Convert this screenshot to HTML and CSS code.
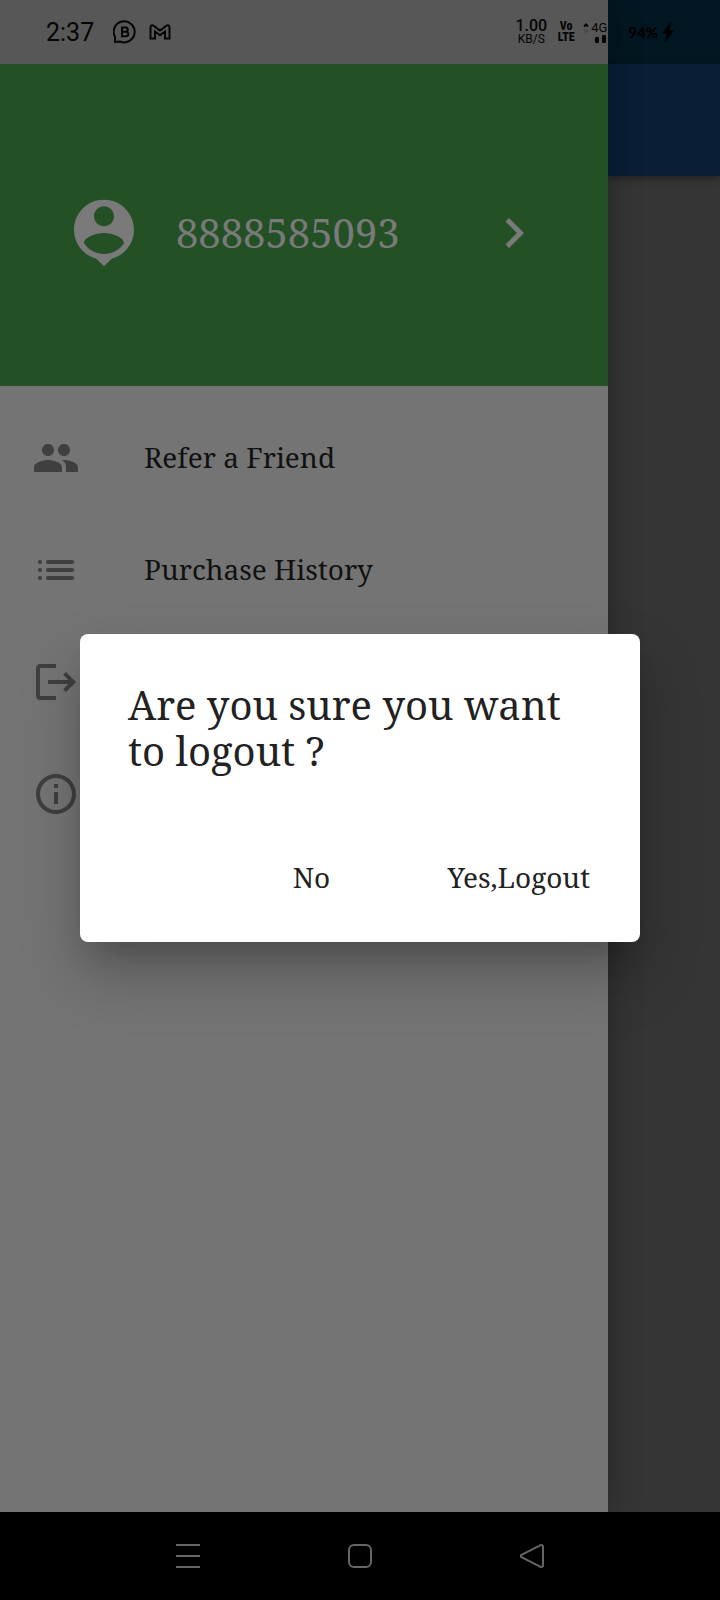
FILE: index.html
```html
<!DOCTYPE html>
<html lang="en">
<head>
<meta charset="utf-8">
<meta name="viewport" content="width=device-width, initial-scale=1">
<title>Logout</title>
<link rel="stylesheet" href="styles.css">
</head>
<body>
<div class="screen">
  <div class="app">
    <nav class="drawer">
      <div class="status-space"></div>
      <button class="account">
        <svg class="account-icon" viewBox="0 0 24 24" aria-hidden="true"><path d="M12 2c-4.97 0-9 4.03-9 9 0 4.17 2.84 7.67 6.69 8.69L12 22l2.31-2.31C18.16 18.67 21 15.17 21 11c0-4.97-4.03-9-9-9zm0 2c1.66 0 3 1.34 3 3s-1.34 3-3 3-3-1.34-3-3 1.34-3 3-3zm0 14.3c-2.5 0-4.71-1.28-6-3.22.03-1.99 4-3.08 6-3.08 1.99 0 5.97 1.09 6 3.08-1.29 1.94-3.5 3.22-6 3.22z"/></svg>
        <span class="phone">8888585093</span>
        <svg class="chevron" viewBox="0 0 24 24" aria-hidden="true"><path d="M10 6L8.59 7.41 13.17 12l-4.58 4.59L10 18l6-6z"/></svg>
      </button>
      <div class="menu">
        <button class="item">
          <svg class="icon" viewBox="0 0 24 24" aria-hidden="true"><path d="M16 11c1.66 0 2.99-1.34 2.99-3S17.66 5 16 5c-1.66 0-3 1.34-3 3s1.34 3 3 3zm-8 0c1.66 0 2.99-1.34 2.99-3S9.66 5 8 5C6.34 5 5 6.34 5 8s1.34 3 3 3zm0 2c-2.33 0-7 1.17-7 3.500V19h14v-2.500c0-2.330-4.670-3.500-7-3.500zm8 0c-.29 0-.62.02-.97.05 1.160.84 1.970 1.970 1.970 3.450V19h6v-2.500c0-2.330-4.670-3.500-7-3.500z"/></svg>
          <span class="label">Refer a Friend</span>
        </button>
        <button class="item">
          <svg class="icon" viewBox="0 0 24 24" aria-hidden="true"><rect x="3" y="7" width="2" height="2" rx=".8"/><rect x="3" y="11" width="2" height="2" rx=".8"/><rect x="3" y="15" width="2" height="2" rx=".8"/><rect x="7" y="7" width="14" height="2" rx=".9"/><rect x="7" y="11" width="14" height="2" rx=".9"/><rect x="7" y="15" width="14" height="2" rx=".9"/></svg>
          <span class="label">Purchase History</span>
        </button>
        <button class="item" aria-label="Logout">
          <svg class="icon" viewBox="0 0 24 24" aria-hidden="true"><path d="M17 7l-1.410 1.410L18.170 11H8v2h10.170l-2.580 2.580L17 17l5-5zM4 5h8V3H4c-1.100 0-2 .9-2 2v14c0 1.100.9 2 2 2h8v-2H4z"/></svg>
        </button>
        <button class="item" aria-label="About">
          <svg class="icon" viewBox="0 0 24 24" aria-hidden="true"><path d="M11 7h2v2h-2zm0 4h2v6h-2zm1-9C6.480 2 2 6.480 2 12s4.480 10 10 10 10-4.480 10-10S17.520 2 12 2zm0 18c-4.410 0-8-3.590-8-8s3.590-8 8-8 8 3.590 8 8-3.590 8-8 8z"/></svg>
        </button>
      </div>
    </nav>
    <main class="page">
      <div class="page-status"></div>
      <div class="page-bar"></div>
    </main>
    <header class="status">
      <span class="clock">2:37</span>
      <svg class="chat" viewBox="0 0 24 24" aria-hidden="true"><path d="M2 22V17A10.500 10.500 0 1 1 7 21.500Q5 21.500 2 22Z"/><path d="M9 7.500h3.600a2.100 2.100 0 0 1 0 4.300H9zM9 11.800h4a2.200 2.200 0 0 1 0 4.500H9z"/></svg>
      <svg class="mail" viewBox="0 0 22 16" aria-hidden="true"><path d="M1.500 14.500V3Q2 .5 4.500 1.600L11 6.500 17.500 1.600Q20 .5 20.500 3V14.500H16V7.500L11 11.200 6 7.500V14.500Z"/></svg>
      <span class="spacer"></span>
      <span class="speed"><span class="rate">1.00</span><span class="unit">KB/S</span></span>
      <span class="volte"><span>Vo</span><span>LTE</span></span>
      <span class="network">
        <span class="net-row"><svg class="arrows" viewBox="0 0 6 10" aria-hidden="true"><path d="M1 3.500L3 1.500 5 3.500"/><path class="dim" d="M1 7L3 9 5 7"/></svg><span class="gen">4G</span></span>
        <svg class="bars" viewBox="0 0 26 20" aria-hidden="true"><rect x="0" y="14" width="4" height="6" rx="1"/><rect x="7" y="12" width="4" height="8" rx="1"/><rect class="faint" x="15" y="7" width="3" height="13" rx="1"/><rect class="faint" x="22" y="0" width="3" height="20" rx="1"/></svg>
      </span>
      <span class="battery">94%</span>
      <svg class="bolt" viewBox="0 0 12 22" aria-hidden="true"><path d="M9 0L0 12.500H4.500L3 22 12 9H7.500Z"/></svg>
    </header>
    <div class="overlay">
      <div class="dialog" role="alertdialog" aria-modal="true" aria-labelledby="dialog-title">
        <h1 class="title" id="dialog-title">Are you sure you want to logout ?</h1>
        <div class="actions">
          <button class="action">No</button>
          <button class="action">Yes,Logout</button>
        </div>
      </div>
    </div>
  </div>
  <footer class="system">
    <button class="key" aria-label="Recent apps"><svg viewBox="0 0 24 24"><path d="M0 1H24M0 12H24M0 23H24"/></svg></button>
    <button class="key" aria-label="Home"><svg viewBox="0 0 24 24"><rect x="1" y="1" width="22" height="22" rx="5"/></svg></button>
    <button class="key" aria-label="Back"><svg viewBox="0 0 24 24"><path d="M1.500 10.800L20.500 1.200Q23 .5 23 3V21Q23 23.500 20.500 22.800L1.500 13.200Q0 12 1.500 10.800Z"/></svg></button>
  </footer>
</div>
</body>
</html>
```

FILE: styles.css
```css
* { box-sizing: border-box; }

body {
  margin: 0;
  background: #000;
  font-family: "Noto Serif", "Droid Serif", "Liberation Serif", serif;
}

button {
  border: 0;
  padding: 0;
  background: none;
  color: inherit;
  font: inherit;
  text-align: left;
}

svg { display: block; flex: none; }

.screen {
  display: flex;
  flex-direction: column;
  min-height: 100vh;
}

.app {
  position: relative;
  flex: 1;
  display: flex;
}

.drawer {
  position: relative;
  flex: 0 0 auto;
  width: calc(100% - 112px);
  background: #747474;
  box-shadow: 0 0 32px rgba(0, 0, 0, .3);
}

.status-space { height: 64px; background: #575757; }

.account {
  display: flex;
  align-items: center;
  width: 100%;
  height: 322px;
  padding: 16px 64px 0;
  background: #245026;
  color: #7a7a7a;
  fill: currentColor;
}

.account-icon { width: 80px; height: 80px; }
.phone { flex: 1; padding: 0 0 2px 32px; font-size: 40px; }
.chevron { width: 60px; height: 60px; }

.menu { padding-top: 16px; }

.item {
  display: flex;
  align-items: center;
  gap: 64px;
  width: 100%;
  height: 112px;
  padding: 0 32px;
  color: #111;
  font-size: 28px;
}

.label { padding-bottom: 2px; }

.icon { width: 48px; height: 48px; fill: #3f3f3f; }

.page { flex: 1; background: #353535; }
.page-status { height: 64px; background: #031722; }
.page-bar {
  height: 112px;
  background: #081f35;
  box-shadow: 0 2px 8px rgba(0, 0, 0, .4);
}

.status {
  position: absolute;
  inset: 0 0 auto;
  display: flex;
  align-items: center;
  height: 64px;
  padding: 0 46px;
  color: #050505;
  font-family: Roboto, sans-serif;
}

.clock { width: 67px; font-size: 25px; }
.chat { width: 24px; height: 24px; fill: none; stroke: #050505; stroke-width: 2; }
.mail { width: 22px; height: 16px; margin-left: 12px; fill: none; stroke: #050505; stroke-width: 2; }
.spacer { flex: 1; }

.speed { display: flex; flex-direction: column; align-items: center; margin-right: 10px; }
.rate { font-size: 16px; font-weight: 500; line-height: 14px; }
.unit { font-size: 12px; line-height: 12px; }

.volte {
  display: flex;
  flex-direction: column;
  align-items: center;
  width: 18px;
  margin-right: 8px;
  font-family: "Roboto Condensed", "Open Sans Condensed", Roboto, sans-serif;
  font-size: 12px;
  font-weight: 800;
  line-height: 11px;
}

.network { position: relative; width: 38px; height: 22px; margin-right: 7px; }
.net-row { display: flex; align-items: center; gap: 2px; }
.arrows { width: 6px; height: 10px; fill: none; stroke: #050505; stroke-width: 2; }
.dim { stroke: #484848; }
.gen { font-size: 13px; line-height: 13px; }
.bars { position: absolute; right: 0; bottom: 0; width: 26px; height: 20px; fill: #050505; }
.faint { fill: #03121b; }
.battery { margin-right: 4px; color: #000; font-family: Lato, sans-serif; font-size: 15px; font-weight: 900; }
.bolt { width: 12px; height: 22px; fill: #000; }

.overlay {
  position: absolute;
  inset: 64px 0 0;
  display: flex;
  align-items: center;
  justify-content: center;
  padding: 0 80px;
}

.dialog {
  width: 100%;
  max-width: 560px;
  border-radius: 8px;
  background: #fff;
  color: #222;
  box-shadow: 0 22px 30px -14px rgba(0, 0, 0, .2), 0 32px 60px 4px rgba(0, 0, 0, .2);
}

.title {
  margin: 0;
  padding: 48px 48px 56px;
  font-size: 40px;
  font-weight: 400;
  line-height: 46px;
}

.actions {
  display: flex;
  justify-content: flex-end;
  gap: 16px;
  padding: 0 18px 16px;
}

.action {
  min-width: 176px;
  height: 96px;
  padding: 0 32px 2px;
  font-size: 28px;
  text-align: center;
}

.system {
  display: flex;
  align-items: center;
  justify-content: center;
  gap: 148px;
  height: 88px;
  background: #000;
}

.key { width: 24px; height: 24px; }
.key svg { width: 24px; height: 24px; fill: none; stroke: #666; stroke-width: 2; }
```
